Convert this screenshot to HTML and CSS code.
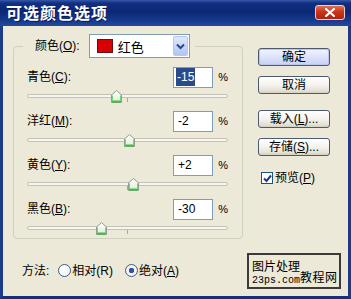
FILE: index.html
```html
<!DOCTYPE html>
<html>
<head>
<meta charset="utf-8">
<link rel="stylesheet" href="styles.css">
</head>
<body>
<div class="window">
  <div class="titlebar">
    <span class="title">可选颜色选项</span>
    <span class="close"><svg width="10" height="9" viewBox="0 0 10 9"><path d="M1 1 L9 8 M9 1 L1 8" stroke="#fff" stroke-width="2.2" stroke-linecap="square"/></svg></span>
  </div>
  <div class="content">
    <div class="main">
      <fieldset class="group">
        <legend class="legend">
          <span class="lbl">颜色(<u>O</u>):</span>
          <span class="combo">
            <span class="swatch"></span>
            <span class="combo-text">红色</span>
            <span class="combo-btn"><svg width="9" height="7" viewBox="0 0 9 7"><path d="M1 1.5 L4.5 5 L8 1.5" fill="none" stroke="#2a4790" stroke-width="2"/></svg></span>
          </span>
        </legend>

        <div class="row">
          <span class="lbl grow">青色(<u>C</u>):</span>
          <span class="input"><span class="sel">-15</span></span>
          <span class="pct">%</span>
        </div>
        <div class="slider">
          <div class="track"></div><div class="tick"></div>
          <svg class="thumb" style="left:84px" width="11" height="13" viewBox="0 0 11 13"><use href="#thumb"/></svg>
        </div>

        <div class="row">
          <span class="lbl grow">洋红(<u>M</u>):</span>
          <span class="input">-2</span>
          <span class="pct">%</span>
        </div>
        <div class="slider">
          <div class="track"></div><div class="tick"></div>
          <svg class="thumb" style="left:97px" width="11" height="13" viewBox="0 0 11 13"><use href="#thumb"/></svg>
        </div>

        <div class="row">
          <span class="lbl grow">黄色(<u>Y</u>):</span>
          <span class="input">+2</span>
          <span class="pct">%</span>
        </div>
        <div class="slider">
          <div class="track"></div><div class="tick"></div>
          <svg class="thumb" style="left:101px" width="11" height="13" viewBox="0 0 11 13"><use href="#thumb"/></svg>
        </div>

        <div class="row">
          <span class="lbl grow">黑色(<u>B</u>):</span>
          <span class="input">-30</span>
          <span class="pct">%</span>
        </div>
        <div class="slider">
          <div class="track"></div><div class="tick"></div>
          <svg class="thumb" style="left:69px" width="11" height="13" viewBox="0 0 11 13"><use href="#thumb"/></svg>
        </div>
      </fieldset>

      <div class="buttons">
        <span class="btn default">确定</span>
        <span class="btn">取消</span>
        <span class="btn gap">载入(<u>L</u>)...</span>
        <span class="btn">存储(<u>S</u>)...</span>
        <span class="check-row">
          <span class="checkbox"><svg width="9" height="9" viewBox="0 0 9 9"><path d="M1 4.5 L3.5 7 L8 1.5" fill="none" stroke="#21398c" stroke-width="2"/></svg></span>
          <span class="lbl">预览(<u>P</u>)</span>
        </span>
      </div>
    </div>

    <div class="footer">
      <div class="method">
        <span class="lbl">方法:</span>
        <span class="radio"></span><span class="lbl rlabel">相对(R)</span>
        <span class="radio on"></span><span class="lbl">绝对(<u>A</u>)</span>
      </div>
      <div class="watermark">
        <div class="wm-left">
          <span class="wm-cn">图片处理</span>
          <span class="wm-url">23ps.com</span>
        </div>
        <span class="wm-big">教程网</span>
      </div>
    </div>
  </div>
</div>
<svg width="0" height="0" class="defs">
  <defs>
    <linearGradient id="tg" x1="0" y1="0" x2="0" y2="1">
      <stop offset="0" stop-color="#ffffff"/>
      <stop offset="1" stop-color="#e2ecd9"/>
    </linearGradient>
    <g id="thumb">
      <polygon points="0.5,5 5.5,0.5 10.5,5 10.5,12.5 0.5,12.5" fill="url(#tg)" stroke="#8aa08a"/>
      <rect x="1" y="10.5" width="9" height="2" fill="#3fbf3f"/>
      <rect x="1" y="5.5" width="1" height="5" fill="#7ccf7c"/>
      <rect x="9" y="5.5" width="1" height="5" fill="#7ccf7c"/>
    </g>
  </defs>
</svg>
</body>
</html>
```

FILE: styles.css
```css
html, body {
  margin: 0;
  padding: 0;
}
body {
  width: 351px;
  height: 299px;
  overflow: hidden;
  font-family: "Liberation Sans", "Noto Sans CJK SC", sans-serif;
  font-size: 12px;
  color: #000;
}
.defs {
  position: absolute;
}
.window {
  width: 351px;
  height: 299px;
  box-sizing: border-box;
  background: #ece9d8;
  border-left: 3px solid #1b3a8a;
  border-right: 3px solid #1b3a8a;
  border-bottom: 3px solid #12307c;
  display: flex;
  flex-direction: column;
}
.titlebar {
  height: 26px;
  margin: 0 -3px;
  flex: none;
  display: flex;
  align-items: center;
  justify-content: space-between;
  padding: 0 6px 0 6px;
  background: linear-gradient(to bottom, #3558a8 0%, #122f80 12%, #0b2876 45%, #15378a 75%, #24489e 100%);
}
.title {
  color: #fff;
  font-family: "Noto Sans CJK SC", sans-serif;
  font-weight: 700;
  font-size: 16px;
  letter-spacing: 1px;
  line-height: 16px;
  margin-top: -3px;
  text-shadow: 1px 1px 0 #0a1a50;
}
.close {
  width: 30px;
  height: 15px;
  box-sizing: border-box;
  border: 1px solid #e8d0d0;
  border-radius: 3px;
  background: linear-gradient(to bottom, #e2704f 0%, #c8351a 45%, #b0220c 100%);
  display: flex;
  align-items: center;
  justify-content: center;
  margin-top: -2px;
}
.content {
  flex: 1;
  display: flex;
  flex-direction: column;
}
.main {
  display: flex;
  padding-left: 10px;
}
.group {
  margin: 8px 0 0 0;
  width: 230px;
  box-sizing: border-box;
  border: 1px solid #d0d0bf;
  border-radius: 4px;
  padding: 8px 14px 2px 13px;
  min-width: 0;
}
.legend {
  display: flex;
  align-items: center;
  padding: 0 5px 0 12px;
  margin-left: -4px;
}
.lbl {
  white-space: nowrap;
  line-height: 14px;
}
.lbl u {
  text-decoration: underline;
  text-underline-offset: 1px;
}
.combo {
  margin-left: 9px;
  width: 101px;
  height: 24px;
  box-sizing: border-box;
  border: 1px solid #7f9db9;
  background: #fff;
  display: flex;
  align-items: center;
  padding-left: 7px;
}
.swatch {
  width: 16px;
  height: 14px;
  box-sizing: border-box;
  background: #d80000;
  border: 1px solid #6a1010;
}
.combo-text {
  margin-left: 5px;
  flex: 1;
  font-family: "Noto Sans CJK SC", sans-serif;
  font-size: 13px;
}
.combo-btn {
  width: 15px;
  height: 20px;
  margin-right: 1px;
  box-sizing: border-box;
  border: 1px solid #b4c8f0;
  border-radius: 2px;
  background: linear-gradient(to bottom, #dfe9fd 0%, #c2d3f7 60%, #b1c6f4 100%);
  display: flex;
  align-items: center;
  justify-content: center;
}
.row {
  display: flex;
  align-items: center;
  height: 22px;
}
.row + .slider + .row {
  margin-top: 6px;
}
.grow {
  flex: 1;
}
.input {
  width: 40px;
  height: 21px;
  box-sizing: border-box;
  border: 1px solid #7f9db9;
  background: #fff;
  display: flex;
  align-items: center;
  padding-left: 4px;
  font-size: 12px;
}
.sel {
  background: #2b4a8e;
  color: #fff;
  margin-left: -2px;
  padding: 2px 1px 2px 1px;
  line-height: 14px;
}
.pct {
  width: 15px;
  text-align: right;
  font-size: 11px;
}
.slider {
  position: relative;
  height: 14px;
  margin-top: 2px;
}
.track {
  position: absolute;
  left: 0;
  top: 4px;
  width: 201px;
  height: 4px;
  box-sizing: border-box;
  border: 1px solid #c4c2b4;
  border-radius: 2px;
  background: #f6f5f0;
}
.tick {
  position: absolute;
  left: 100px;
  top: 8px;
  width: 1px;
  height: 4px;
  background: #a8a79c;
}
.thumb {
  position: absolute;
  top: 0;
}
.buttons {
  margin-left: 15px;
  padding-top: 22px;
  display: flex;
  flex-direction: column;
  align-items: flex-start;
}
.btn {
  width: 72px;
  height: 18px;
  box-sizing: border-box;
  border: 1px solid #4b5a6e;
  border-radius: 3px;
  background: linear-gradient(to bottom, #ffffff 0%, #f4f3ee 50%, #e3e1d6 85%, #d2cfc2 100%);
  display: flex;
  align-items: center;
  justify-content: center;
  white-space: nowrap;
  line-height: 14px;
  margin-bottom: 10px;
}
.btn.default {
  background: linear-gradient(to bottom, #f2f4ff 0%, #dde3fb 50%, #c8d0f4 100%);
  box-shadow: inset 0 0 0 1px #b9c6f0;
}
.btn.gap {
  margin-top: 6px;
}
.check-row {
  display: flex;
  align-items: center;
  margin-top: 5px;
  margin-left: 3px;
}
.checkbox {
  width: 12px;
  height: 12px;
  box-sizing: border-box;
  border: 1px solid #1c5180;
  background: #fff;
  display: flex;
  align-items: center;
  justify-content: center;
  margin-right: 2px;
}
.footer {
  flex: 1;
  display: flex;
  align-items: center;
  justify-content: space-between;
  padding: 13px 7px 7px 19px;
}
.method {
  display: flex;
  align-items: center;
}
.radio {
  width: 13px;
  height: 13px;
  box-sizing: border-box;
  border: 1px solid #3a5f8c;
  border-radius: 50%;
  background: radial-gradient(circle at 35% 35%, #ffffff 0%, #f1efe6 100%);
  margin: 0 1px 0 9px;
}
.radio.on {
  background: radial-gradient(circle, #2f52a8 0 2.5px, #f4f3ee 3px);
}
.rlabel {
  margin-right: 3px;
}
.watermark {
  width: 94px;
  height: 36px;
  box-sizing: border-box;
  border: 2px solid #3a3a3a;
  display: flex;
  align-items: flex-end;
  padding: 1px 1px 1px 3px;
  white-space: nowrap;
}
.wm-left {
  display: flex;
  flex-direction: column;
  gap: 3px;
  flex: none;
}
.wm-cn {
  font-family: "Noto Sans CJK SC", sans-serif;
  font-size: 12px;
  line-height: 13px;
}
.wm-url {
  font-family: "Liberation Mono", monospace;
  font-size: 10px;
  line-height: 11px;
}
.wm-big {
  flex: none;
  font-family: "Noto Sans CJK SC", sans-serif;
  font-size: 12px;
  line-height: 18px;
  letter-spacing: 0.5px;
}
```
